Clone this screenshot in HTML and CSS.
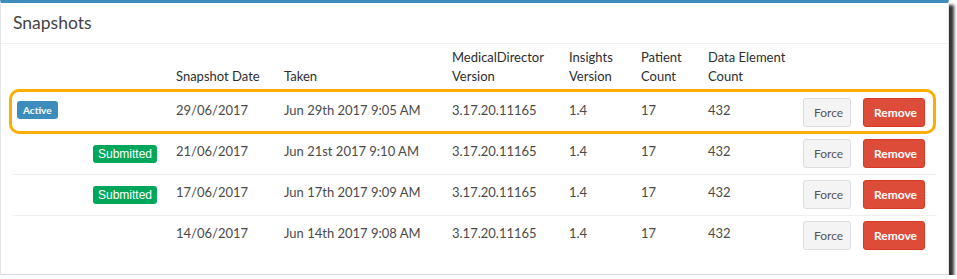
FILE: index.html
```html
<!DOCTYPE html>
<html lang="en">
<head>
    <meta charset="UTF-8">
    <meta name="viewport" content="width=device-width, initial-scale=1.0">
    <title>Snapshots</title>
    <link rel="stylesheet" href="styles.css">
</head>
<body>
    <div class="box">
        <div class="box-header">
            <h3 class="box-title">Snapshots</h3>
        </div>
        <div class="box-body">
            <div class="snap-table">
                <div class="snap-row head">
                    <div class="cell"></div>
                    <div class="cell">Snapshot Date</div>
                    <div class="cell">Taken</div>
                    <div class="cell">MedicalDirector<br>Version</div>
                    <div class="cell">Insights<br>Version</div>
                    <div class="cell">Patient<br>Count</div>
                    <div class="cell">Data Element<br>Count</div>
                    <div class="cell"></div>
                </div>
                <div class="snap-row active">
                    <div class="cell status"><span class="label label-active">Active</span></div>
                    <div class="cell">29/06/2017</div>
                    <div class="cell">Jun 29th 2017 9:05 AM</div>
                    <div class="cell">3.17.20.11165</div>
                    <div class="cell">1.4</div>
                    <div class="cell">17</div>
                    <div class="cell">432</div>
                    <div class="cell actions">
                        <button class="btn btn-force">Force</button>
                        <button class="btn btn-remove">Remove</button>
                    </div>
                </div>
                <div class="snap-row">
                    <div class="cell status"><span class="label label-submitted">Submitted</span></div>
                    <div class="cell">21/06/2017</div>
                    <div class="cell">Jun 21st 2017 9:10 AM</div>
                    <div class="cell">3.17.20.11165</div>
                    <div class="cell">1.4</div>
                    <div class="cell">17</div>
                    <div class="cell">432</div>
                    <div class="cell actions">
                        <button class="btn btn-force">Force</button>
                        <button class="btn btn-remove">Remove</button>
                    </div>
                </div>
                <div class="snap-row">
                    <div class="cell status"><span class="label label-submitted">Submitted</span></div>
                    <div class="cell">17/06/2017</div>
                    <div class="cell">Jun 17th 2017 9:09 AM</div>
                    <div class="cell">3.17.20.11165</div>
                    <div class="cell">1.4</div>
                    <div class="cell">17</div>
                    <div class="cell">432</div>
                    <div class="cell actions">
                        <button class="btn btn-force">Force</button>
                        <button class="btn btn-remove">Remove</button>
                    </div>
                </div>
                <div class="snap-row last">
                    <div class="cell status"></div>
                    <div class="cell">14/06/2017</div>
                    <div class="cell">Jun 14th 2017 9:08 AM</div>
                    <div class="cell">3.17.20.11165</div>
                    <div class="cell">1.4</div>
                    <div class="cell">17</div>
                    <div class="cell">432</div>
                    <div class="cell actions">
                        <button class="btn btn-force">Force</button>
                        <button class="btn btn-remove">Remove</button>
                    </div>
                </div>
            </div>
        </div>
    </div>
</body>
</html>
```

FILE: styles.css
```css
body {
    margin: 0;
    background-color: #fff;
    font-family: Lato, "Open Sans", sans-serif;
    color: #444;
}
.box {
    width: 947px;
    background-color: #fff;
    border-top: 3px solid #3c8dbc;
    border-left: 1px solid #e3e6ea;
    border-right: 1px solid #e3e6ea;
    border-bottom: 1px solid #d2d6de;
    box-shadow: 5px 5px 3px rgba(0, 0, 0, 0.8);
}
.box-header {
    padding: 10px 12px;
    border-bottom: 1px solid #f0f0f0;
}
.box-title {
    margin: 0;
    font-size: 17.5px;
    font-weight: normal;
    line-height: 20px;
    color: #444;
}
.box-body {
    padding: 0 11px 18px 12px;
}
.snap-row {
    display: grid;
    grid-template-columns: 155px 108px 168px 117px 72px 67px 95px 1fr;
    height: 40px;
    border-bottom: 1px solid #f0f0f0;
    font-size: 13px;
    line-height: 20px;
    color: #4a4a4a;
}
.snap-row.last {
    border-bottom: none;
}
.snap-row.head {
    height: auto;
    border-bottom: none;
    color: #2e2e2e;
    line-height: 19px;
}
.snap-row.head .cell {
    display: flex;
    flex-direction: column;
    justify-content: flex-end;
    padding: 4px 8px 3px;
}
.cell {
    padding: 7px 8px 0;
    white-space: nowrap;
}
.status {
    display: flex;
    justify-content: flex-end;
    align-items: flex-start;
    padding: 11px 11px 0 0;
}
.actions {
    display: flex;
    gap: 12px;
    align-items: flex-start;
    padding-top: 5px;
}
.snap-row.active {
    height: 39px;
    margin: 0 1px 0 -4px;
    padding-left: 1px;
    border: 3px solid #f9ae00;
    border-radius: 10px;
}
.snap-row.active .cell {
    padding-top: 8px;
}
.snap-row.active .status {
    justify-content: flex-start;
    padding: 9px 0 0 4px;
}
.snap-row.active .actions {
    padding-top: 6px;
}
.label {
    display: inline-block;
    height: 18px;
    line-height: 18px;
    border-radius: 3px;
    color: #fff;
}
.label-active {
    padding: 0 6px;
    background-color: #3c8dbc;
    font-size: 10px;
    font-weight: bold;
}
.label-submitted {
    padding: 0 5px;
    background-color: #00a65a;
    font-family: "Liberation Sans", Arial, sans-serif;
    font-size: 12px;
}
.btn {
    height: 29px;
    padding: 0 10px;
    border-radius: 3px;
    font-family: Lato, "Open Sans", sans-serif;
    font-size: 12px;
    cursor: pointer;
}
.btn-force {
    width: 48px;
    background-color: #f4f4f4;
    border: 1px solid #ddd;
    color: #555;
}
.btn-remove {
    width: 62px;
    background-color: #dd4b39;
    border: 1px solid #d73925;
    color: #fff;
    font-weight: bold;
}
```
